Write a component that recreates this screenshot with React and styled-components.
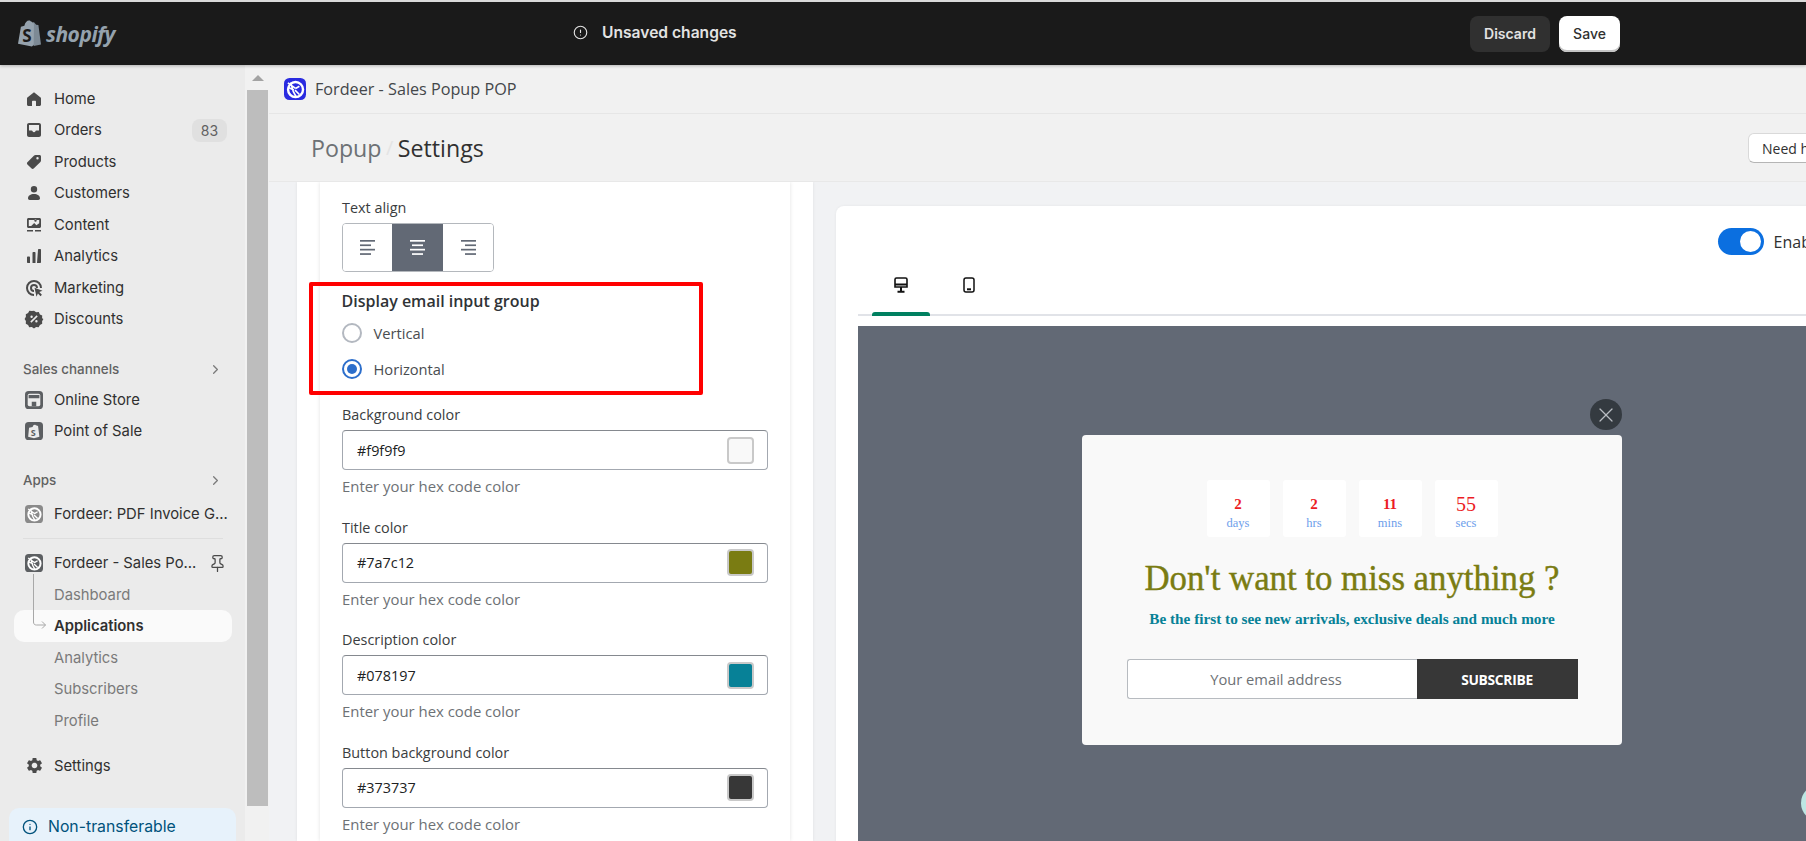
import React from "react"
import styled, { createGlobalStyle } from "styled-components"
import { AlertCircle, ChevronRight, Info, Pin, X } from "lucide-react"
import { MdSettings } from "react-icons/md"

const GlobalStyle = createGlobalStyle`
  html, body { margin: 0; padding: 0; overflow: hidden; background: #f1f1f1; }
  * { box-sizing: border-box; }
`

const Page = styled.div`
  width: 1806px;
  height: 841px;
  overflow: hidden;
  display: flex;
  flex-direction: column;
  border-top: 2px solid #d9d9d9;
  font-family: "Open Sans", "Liberation Sans", sans-serif;
`

const TopBar = styled.header`
  height: 63px;
  flex: none;
  display: flex;
  align-items: center;
  background: #1a1a1a;
  position: relative;
  z-index: 2;
  box-shadow: 0 1px 3px rgba(0, 0, 0, 0.25);
`

const Brand = styled.div`
  width: 573px;
  padding-left: 18px;
  display: flex;
  align-items: center;
  gap: 5px;
`

const BrandName = styled.span`
  font-family: "Open Sans", sans-serif;
  font-weight: 700;
  font-style: italic;
  font-size: 21px;
  letter-spacing: -0.5px;
  color: #95a2ad;
`

const Unsaved = styled.div`
  flex: 1;
  display: flex;
  align-items: center;
  gap: 14px;
  color: #e3e3e3;
  font-family: Inter, sans-serif;
  font-weight: 600;
  font-size: 15.6px;
  margin-top: -2px;
`

const BarActions = styled.div`
  display: flex;
  gap: 9px;
  padding-right: 186px;
`

const BarButton = styled.button`
  height: 36px;
  width: ${(p) => (p.$primary ? "61px" : "80px")};
  border: 0;
  border-radius: 8px;
  font-family: Inter, sans-serif;
  font-size: 14px;
  font-weight: ${(p) => (p.$primary ? 500 : 600)};
  background: ${(p) => (p.$primary ? "#fff" : "#303030")};
  color: ${(p) => (p.$primary ? "#303030" : "#e3e3e3")};
  box-shadow: ${(p) => (p.$primary ? "inset 0 -2px 0 #c4c4c4" : "none")};
`

const Body = styled.div`
  flex: 1;
  min-height: 0;
  display: flex;
`

const Sidebar = styled.nav`
  width: 245px;
  flex: none;
  background: #ebebeb;
  padding-top: 18px;
  overflow: hidden;
  font-family: Inter, sans-serif;
`

const NavRow = styled.div`
  position: relative;
  height: 31.5px;
  margin: 0 13px 0 14px;
  padding-right: 5px;
  display: flex;
  align-items: center;
  border-radius: 10px;
  white-space: nowrap;
  font-size: 14.8px;
  color: ${(p) => (p.$sub ? "#7a7a7a" : "#303030")};
  font-weight: ${(p) => (p.$active ? 600 : 400)};
  background: ${(p) => (p.$active ? "#fafafa" : "transparent")};
`

const NavIcon = styled.span`
  width: 40px;
  flex: none;
  display: flex;
  justify-content: center;
  color: #4a4a4a;
`

const Badge = styled.span`
  margin-left: auto;
  width: 35px;
  height: 23px;
  border-radius: 8px;
  background: #e0e0e0;
  color: #616161;
  font-size: 14px;
  display: flex;
  align-items: center;
  justify-content: center;
`

const PinSlot = styled.span`
  margin-left: auto;
  display: flex;
  color: #4a4a4a;
`

const SectionHead = styled.div`
  height: 27px;
  margin: ${(p) => p.$before || "20.5px"} 22px ${(p) => p.$after || "1.7px"} 23px;
  display: flex;
  align-items: center;
  justify-content: space-between;
  font-size: 13.4px;
  font-weight: 550;
  color: #616161;
`

const Divider = styled.hr`
  margin: 9px 22px 8px 23px;
  border: 0;
  border-top: 1px solid #dedede;
`

const Tree = styled.svg`
  position: absolute;
  left: 18px;
  top: -36px;
`

const SettingsRow = styled.div`
  margin-top: 13.5px;
`

const Notice = styled.div`
  margin: 27px 9px 0;
  height: 60px;
  border-radius: 10px 10px 0 0;
  background: #e7f2fb;
  color: #00527c;
  padding: 8px 0 0 13px;
  display: flex;
  gap: 10px;
  font-size: 15.8px;
  font-weight: 400;
  align-items: flex-start;
  line-height: 22px;
  svg { margin-top: 3px; }
`

const ScrollTrack = styled.div`
  width: 24px;
  flex: none;
  background: #f1f1f1;
  padding-left: 2px;
`

const ScrollArrow = styled.div`
  width: 0;
  margin: 10px auto 9px 5px;
  border-left: 6px solid transparent;
  border-right: 6px solid transparent;
  border-bottom: 6px solid #a3a3a3;
`

const ScrollThumb = styled.div`
  width: 21px;
  height: 716px;
  background: #bdbdbd;
`

const Main = styled.main`
  flex: 1;
  min-width: 0;
  display: flex;
  flex-direction: column;
`

const AppHeader = styled.div`
  height: 49px;
  flex: none;
  display: flex;
  align-items: center;
  gap: 9px;
  padding-left: 15px;
  border-bottom: 1px solid #e6e6e6;
  background: #f1f1f1;
  font-size: 16.2px;
  color: #44474a;
`

const TitleRow = styled.div`
  height: 68px;
  flex: none;
  display: flex;
  align-items: center;
  padding-left: 42px;
  border-bottom: 1px solid #e8e8e8;
  background: #f1f1f1;
  font-size: 23.2px;
  position: relative;
`

const Crumb = styled.span`
  color: ${(p) => (p.$current ? "#303030" : "#6d7175")};
`

const CrumbSlash = styled.span`
  color: #e4e4e4;
  margin: 0 4.5px;
  font-size: 20px;
`

const HelpButton = styled.button`
  position: absolute;
  left: 1479px;
  top: 19px;
  width: 90px;
  height: 30px;
  padding: 0 0 0 13px;
  text-align: left;
  border: 1px solid #d9d9d9;
  border-bottom-color: #b5b5b5;
  border-radius: 6px;
  background: #fff;
  font-family: "Open Sans", sans-serif;
  font-size: 14px;
  color: #303030;
`

const Content = styled.div`
  flex: 1;
  min-height: 0;
  display: flex;
  padding-left: 28px;
  background: #f1f2f4;
`

const FormPanel = styled.div`
  width: 516px;
  flex: none;
  padding: 0 23px;
  background: #fff;
  box-shadow: 0 0 3px rgba(0, 0, 0, 0.08);
  overflow: hidden;
`

const FormCard = styled.div`
  height: 100%;
  padding: 16px 22px 0;
  background: #fff;
  box-shadow: 0 0 4px rgba(0, 0, 0, 0.12);
`

const FieldLabel = styled.div`
  height: 20px;
  line-height: 20px;
  margin-bottom: 5px;
  font-size: 14.4px;
  color: #3a3d40;
`

const Segments = styled.div`
  width: 152px;
  height: 49px;
  display: grid;
  grid-template-columns: 49px 51px 50px;
  border: 1px solid #b4b8bd;
  border-radius: 4px;
  overflow: hidden;
`

const Segment = styled.div`
  display: flex;
  align-items: center;
  justify-content: center;
  background: ${(p) => (p.$on ? "#626975" : "#fff")};
  color: ${(p) => (p.$on ? "#fff" : "#626975")};
`

const Highlight = styled.fieldset`
  width: 394px;
  height: 113px;
  margin: 10px 0 0 -33px;
  padding: 4.5px 0 0 28.5px;
  border: 4.5px solid #ff0000;
  border-radius: 2px;
`

const GroupTitle = styled.div`
  height: 20px;
  line-height: 20px;
  margin-bottom: 4px;
  font-size: 16px;
  font-weight: 600;
  color: #303336;
`

const RadioRow = styled.label`
  height: 36px;
  padding-top: 1px;
  display: flex;
  align-items: center;
  gap: 12px;
  font-size: 14.7px;
  color: #4a4d50;
`

const RadioDot = styled.span`
  width: 20px;
  height: 20px;
  border-radius: 50%;
  flex: none;
  border: 2px solid ${(p) => (p.$on ? "#2c6ecb" : "#b3b8c0")};
  display: flex;
  align-items: center;
  justify-content: center;
  &::after {
    content: "";
    width: 10px;
    height: 10px;
    border-radius: 50%;
    background: ${(p) => (p.$on ? "#2c6ecb" : "transparent")};
  }
`

const ColorField = styled.div`
  width: 426px;
  margin-top: ${(p) => (p.$first ? "10px" : "21.5px")};
`

const ColorBox = styled.div`
  height: 40px;
  display: flex;
  align-items: center;
  padding: 0 13px 0 14px;
  border: 1px solid #a3a8b0;
  border-top-color: #85898f;
  border-radius: 4px;
`

const HexInput = styled.input`
  flex: 1;
  min-width: 0;
  border: 0;
  outline: 0;
  padding: 0;
  font-family: "Open Sans", sans-serif;
  font-size: 14.4px;
  color: #202223;
  background: transparent;
`

const Swatch = styled.span`
  width: 27px;
  height: 27px;
  border: 2px solid #c9c9c9;
  border-radius: 4px;
  background: ${(p) => p.$color};
`

const Helper = styled.div`
  margin-top: 6px;
  height: 20px;
  line-height: 20px;
  font-size: 14.9px;
  color: #6d7175;
`

const RightPane = styled.div`
  padding: 24px 0 0 23px;
`

const PreviewCard = styled.section`
  width: 1032px;
  height: 700px;
  padding: 22px 22px 0;
  background: #fff;
  border-radius: 8px;
  box-shadow: 0 0 3px rgba(0, 0, 0, 0.06);
`

const EnableRow = styled.div`
  height: 27px;
  display: flex;
  justify-content: flex-end;
  align-items: center;
  gap: 10px;
  padding-right: 22px;
  font-size: 16px;
  color: #303030;
`

const Toggle = styled.span`
  width: 46px;
  height: 27px;
  border-radius: 14px;
  background: #0b6fe0;
  display: flex;
  justify-content: flex-end;
  align-items: center;
  padding-right: 3px;
  &::after {
    content: "";
    width: 21px;
    height: 21px;
    border-radius: 50%;
    background: #fff;
  }
`

const TabList = styled.div`
  height: 47px;
  margin: 14px 0 10px;
  padding-left: 14px;
  display: flex;
  gap: 10px;
  border-bottom: 2px solid #e1e3e8;
`

const Tab = styled.div`
  width: 58px;
  height: 47px;
  padding-top: 8px;
  display: flex;
  flex-direction: column;
  align-items: center;
  justify-content: space-between;
  color: #111;
  &::after {
    content: "";
    width: 100%;
    height: 4px;
    border-radius: 3px 3px 0 0;
    background: ${(p) => (p.$on ? "#008060" : "transparent")};
  }
`

const Preview = styled.div`
  position: relative;
  width: 988px;
  height: 600px;
  padding-top: 109px;
  display: flex;
  justify-content: center;
  align-items: flex-start;
  background: #626975;
`

const Popup = styled.div`
  position: relative;
  width: 540px;
  height: 310px;
  padding-top: 45px;
  display: flex;
  flex-direction: column;
  align-items: center;
  border-radius: 4px;
  background: #f9f9f9;
  font-family: "Liberation Serif", serif;
`

const CloseButton = styled.span`
  position: absolute;
  top: -36px;
  right: 0;
  width: 32px;
  height: 31px;
  border-radius: 50%;
  background: #343a40;
  color: #b9bdc2;
  display: flex;
  align-items: center;
  justify-content: center;
`

const Countdown = styled.div`
  display: flex;
  gap: 13px;
`

const TimeBox = styled.div`
  width: 63px;
  height: 57px;
  padding-top: 14px;
  border-radius: 3px;
  background: #fff;
  display: flex;
  flex-direction: column;
  align-items: center;
`

const TimeValue = styled.span`
  font-size: ${(p) => (p.$big ? "20px" : "15px")};
  line-height: 21px;
  font-weight: ${(p) => (p.$big ? 400 : 700)};
  color: #ec1c24;
`

const TimeUnit = styled.span`
  font-size: 12.5px;
  line-height: 16px;
  color: #6d9eeb;
`

const PopupTitle = styled.h2`
  margin: 21.5px 0 0;
  font-size: 34.8px;
  line-height: 40px;
  font-weight: 400;
  -webkit-text-stroke: 0.4px #7a7c12;
  color: #7a7c12;
`

const PopupText = styled.p`
  margin: 10.5px 0 0;
  font-size: 15.25px;
  line-height: 20px;
  font-weight: 700;
  color: #078197;
`

const SubscribeForm = styled.div`
  width: 451px;
  height: 40px;
  margin-top: 30px;
  display: flex;
`

const EmailInput = styled.input`
  width: 290px;
  height: 40px;
  padding: 0 0 0 8px;
  border: 1px solid #b7bbc0;
  border-right: 0;
  border-radius: 3px 0 0 3px;
  outline: 0;
  background: #fff;
  text-align: center;
  font-family: "Open Sans", sans-serif;
  font-size: 14.7px;
  &::placeholder { color: #6d7175; opacity: 1; }
`

const SubscribeButton = styled.button`
  flex: 1;
  border: 0;
  background: #373737;
  color: #fff;
  font-family: "Open Sans", sans-serif;
  font-size: 13.8px;
  font-weight: 700;
  letter-spacing: -0.3px;
`

const ChatBubble = styled.span`
  position: absolute;
  left: 943px;
  top: 459px;
  width: 36px;
  height: 36px;
  border-radius: 50%;
  background: #bde6e3;
`

// hand drawn icons, all on a 20 box
const Icon = ({ children, size = 20 }) => (
  <svg width={size} height={size} viewBox="0 0 20 20" fill="currentColor">{children}</svg>
)

const icons = {
  home: <path d="M10 3.2 3.4 8.6c-.3.2-.4.5-.4.8V15.500c0 .8.7 1.500 1.500 1.500H8v-4.200c0-.6.500-1 1-1h2c.6 0 1 .4 1 1V17h3.500c.8 0 1.500-.7 1.500-1.500V9.400c0-.3-.1-.6-.4-.8z" />,
  orders: <path fillRule="evenodd" d="M5 3h10c1.100 0 2 .9 2 2v10c0 1.100-.9 2-2 2H5c-1.100 0-2-.9-2-2V5c0-1.100.9-2 2-2zm0 2v5.500h2.500c.6 0 1 .3 1.200.9.200.5.700.8 1.300.8s1.100-.3 1.300-.8c.2-.6.600-.9 1.200-.9H15V5z" />,
  products: <path fillRule="evenodd" d="M11.500 3H15.500c.8 0 1.500.7 1.500 1.500v4c0 .5-.2 1-.6 1.400l-6.700 6.700c-.6.6-1.500.6-2.100 0l-4.200-4.200c-.6-.6-.6-1.500 0-2.100l6.700-6.700c.4-.4.9-.6 1.400-.6zm2 4.500a1.200 1.200 0 1 0 0-2.400 1.200 1.200 0 0 0 0 2.400z" />,
  customers: <path d="M10 3a3.200 3.200 0 1 1 0 6.400A3.200 3.200 0 0 1 10 3zM4 15.300C4 12.800 6.500 11 10 11s6 1.800 6 4.300c0 1-.7 1.700-1.700 1.700H5.700C4.700 17 4 16.300 4 15.300z" />,
  content: <path fillRule="evenodd" d="M4.500 3h11C16.300 3 17 3.700 17 4.500v7c0 .8-.7 1.500-1.500 1.500h-11C3.700 13 3 12.300 3 11.500v-7C3 3.700 3.700 3 4.500 3zm.300 8h2.400l3-3 2.200 2.200 2.800-2V5H4.800zM11.500 6.800a1.200 1.200 0 1 0 0-2.400 1.200 1.200 0 0 0 0 2.400zM3 15h6v1.500H3zm8 0h6v1.500h-6z" />,
  analytics: <path d="M3 11.500c0-.6.400-1 1-1h1c.6 0 1 .4 1 1V17H4c-.6 0-1-.4-1-1zM8.500 7c0-.6.400-1 1-1h1c.6 0 1 .4 1 1v10h-3zM14 4c0-.6.400-1 1-1h1c.6 0 1 .4 1 1v12c0 .6-.4 1-1 1h-3z" />,
  marketing: <path fillRule="evenodd" d="M10 2a8 8 0 0 1 8 8h-2a6 6 0 1 0-6 6v2a8 8 0 0 1 0-16zm0 4a4 4 0 0 1 4 4h-2a2 2 0 1 0-2 2v2a4 4 0 0 1 0-8zm.500 3.800 8 3-3.200 1.300 2.600 2.700-1.300 1.400-2.700-2.700-1.400 3.200z" />,
  discounts: <path fillRule="evenodd" d="M10 1.800l2.200 1.400 2.600-.1 1.100 2.300 2.300 1.200-.1 2.600L19.400 10l-1.300 2.200.1 2.600-2.300 1.100-1.200 2.300-2.600-.1L10 19.400l-2.200-1.300-2.600.1-1.100-2.300-2.300-1.200.1-2.600L.6 10l1.300-2.200-.1-2.600 2.300-1.100 1.200-2.300 2.600.1zM7.600 8.900a1.200 1.200 0 1 0 0-2.400 1.200 1.200 0 0 0 0 2.400zm4.800 4.600a1.200 1.200 0 1 0 0-2.400 1.200 1.200 0 0 0 0 2.400zM12.600 6.300 6.300 12.600l1.100 1.100 6.300-6.300z" />,
}

const ShopifyBag = () => (
  <svg width="23" height="27" viewBox="0 0 23 27">
    <path fill="#95a2ad" d="M0 23.800 2.900 6.800 6.400 5.700C7.100 2.400 8.900.4 11 .4c1 0 1.600.5 2 1.100.6 0 1.100.4 1.500 1.100l1.400-.4 1 21.800-3 2.600z" />
    <path fill="#7d8a95" d="M16 2.300 18.200 4.700 20.400 5 23 24.400 15.700 26z" />
    <text x="4.200" y="21.500" fontFamily="Open Sans" fontWeight="700" fontSize="17" fill="#1a1a1a">S</text>
  </svg>
)

const AppLogo = ({ bg, size = 18, radius = 4 }) => (
  <svg width={size} height={size} viewBox="0 0 20 20">
    <rect width="20" height="20" rx={radius} fill={bg} />
    <circle cx="10.500" cy="10.500" r="6.800" fill="none" stroke="#fff" strokeWidth="2.200" />
    <path d="M3.500 4.500 10.500 9.500M3.500 8.500 9 11M6 4 8.500 12.500 11 17M10.500 9.500 14 7.500M10 11 14 15" fill="none" stroke="#fff" strokeWidth="1.500" />
  </svg>
)

const StoreTile = () => (
  <svg width="18" height="18" viewBox="0 0 20 20">
    <rect width="20" height="20" rx="4" fill="#5c5f62" />
    <rect x="3" y="3" width="14" height="14" rx="2" fill="#ebebeb" />
    <path d="M4 4.500h12v3.500H4zM7.500 17v-5h5v5z" fill="#5c5f62" />
  </svg>
)

const PosTile = () => (
  <svg width="18" height="18" viewBox="0 0 20 20">
    <rect width="20" height="20" rx="4" fill="#5c5f62" />
    <path d="M4.500 6.500l4-1C9 3.500 10.500 2.500 12 3.500l2.500 1 1.500 12-6 1.500-6.500-1.500z" fill="#ebebeb" />
    <text x="6.300" y="15" fontFamily="Open Sans" fontWeight="700" fontSize="10" fill="#5c5f62">S</text>
  </svg>
)

const AlignIcon = ({ side }) => {
  const bars = side === "left"
    ? [[0, 15], [0, 11], [0, 15], [0, 11]]
    : side === "center"
      ? [[0, 15], [2, 11], [0, 15], [2, 11]]
      : [[0, 15], [4, 11], [0, 15], [4, 11]]
  return (
    <svg width="15" height="15" viewBox="0 0 15 15" fill="currentColor">
      {bars.map(([x, w], i) => <rect key={i} x={x} y={i * 4.400} width={w} height="1.700" />)}
    </svg>
  )
}

const DesktopIcon = () => (
  <svg width="14" height="16" viewBox="0 0 14 16" fill="none" stroke="currentColor" strokeWidth="1.600">
    <path d="M2.500 1h9c.8 0 1.500.7 1.500 1.500V10H1V2.500C1 1.700 1.700 1 2.500 1z" />
    <path d="M1 7.500h12M7 10v4M3.500 14.800h7" strokeWidth="2" />
  </svg>
)

const MobileIcon = () => (
  <svg width="12" height="16" viewBox="0 0 12 16" fill="none" stroke="currentColor" strokeWidth="1.500">
    <rect x="1" y="1" width="10" height="14" rx="2" />
    <path d="M4 12.300h4" strokeWidth="2" />
  </svg>
)

const mainNav = [
  ["home", "Home"],
  ["orders", "Orders", "83"],
  ["products", "Products"],
  ["customers", "Customers"],
  ["content", "Content"],
  ["analytics", "Analytics"],
  ["marketing", "Marketing"],
  ["discounts", "Discounts"],
]

const colorFields = [
  ["Background color", "#f9f9f9"],
  ["Title color", "#7a7c12"],
  ["Description color", "#078197"],
  ["Button background color", "#373737"],
]

const countdown = [
  ["2", "days"],
  ["2", "hrs"],
  ["11", "mins"],
  ["55", "secs", true],
]

export default function App() {
  return (
    <Page>
      <GlobalStyle />
      <TopBar>
        <Brand>
          <ShopifyBag />
          <BrandName>shopify</BrandName>
        </Brand>
        <Unsaved>
          <AlertCircle size={15} strokeWidth={1.8} />
          Unsaved changes
        </Unsaved>
        <BarActions>
          <BarButton>Discard</BarButton>
          <BarButton $primary>Save</BarButton>
        </BarActions>
      </TopBar>

      <Body>
        <Sidebar>
          {mainNav.map(([key, label, count]) => (
            <NavRow key={key}>
              <NavIcon><Icon>{icons[key]}</Icon></NavIcon>
              {label}
              {count && <Badge>{count}</Badge>}
            </NavRow>
          ))}

          <SectionHead>Sales channels <ChevronRight size={15} color="#7a7a7a" /></SectionHead>
          <NavRow><NavIcon><StoreTile /></NavIcon>Online Store</NavRow>
          <NavRow><NavIcon><PosTile /></NavIcon>Point of Sale</NavRow>

          <SectionHead $before="19.8px" $after="4px">Apps <ChevronRight size={15} color="#7a7a7a" /></SectionHead>
          <NavRow><NavIcon><AppLogo bg="#8a8a8a" /></NavIcon>Fordeer: PDF Invoice G...</NavRow>
          <Divider />
          <NavRow>
            <NavIcon><AppLogo bg="#5c5f62" /></NavIcon>
            Fordeer - Sales Po...
            <PinSlot><Pin size={19} strokeWidth={1.6} /></PinSlot>
          </NavRow>
          <NavRow $sub>
            <NavIcon />Dashboard
          </NavRow>
          <NavRow $active>
            <Tree width="20" height="60" viewBox="0 0 20 60" fill="none" stroke="#a8a8a8" strokeWidth="1">
              <path d="M1.500 0v48c0 2 1 3 3 3h9M10 47.500l3.500 3.500-3.500 3.500" />
            </Tree>
            <NavIcon />Applications
          </NavRow>
          <NavRow $sub><NavIcon />Analytics</NavRow>
          <NavRow $sub><NavIcon />Subscribers</NavRow>
          <NavRow $sub><NavIcon />Profile</NavRow>

          <SettingsRow>
            <NavRow>
              <NavIcon><MdSettings size={19} /></NavIcon>Settings
            </NavRow>
          </SettingsRow>

          <Notice><Info size={16} strokeWidth={2} />Non-transferable</Notice>
        </Sidebar>

        <ScrollTrack>
          <ScrollArrow />
          <ScrollThumb />
        </ScrollTrack>

        <Main>
          <AppHeader>
            <AppLogo bg="#2a2be0" size={22} radius={5} />
            Fordeer - Sales Popup POP
          </AppHeader>
          <TitleRow>
            <Crumb>Popup</Crumb>
            <CrumbSlash>/</CrumbSlash>
            <Crumb $current>Settings</Crumb>
            <HelpButton>Need help?</HelpButton>
          </TitleRow>

          <Content>
            <FormPanel>
              <FormCard>
                <FieldLabel>Text align</FieldLabel>
                <Segments>
                  <Segment><AlignIcon side="left" /></Segment>
                  <Segment $on><AlignIcon side="center" /></Segment>
                  <Segment><AlignIcon side="right" /></Segment>
                </Segments>

                <Highlight>
                  <GroupTitle>Display email input group</GroupTitle>
                  <RadioRow><RadioDot />Vertical</RadioRow>
                  <RadioRow><RadioDot $on />Horizontal</RadioRow>
                </Highlight>

                {colorFields.map(([label, hex], i) => (
                  <ColorField key={label} $first={i === 0}>
                    <FieldLabel>{label}</FieldLabel>
                    <ColorBox>
                      <HexInput readOnly value={hex} />
                      <Swatch $color={hex} />
                    </ColorBox>
                    <Helper>Enter your hex code color</Helper>
                  </ColorField>
                ))}
              </FormCard>
            </FormPanel>

            <RightPane>
              <PreviewCard>
                <EnableRow><Toggle />Enable</EnableRow>
                <TabList>
                  <Tab $on><DesktopIcon /></Tab>
                  <Tab><MobileIcon /></Tab>
                </TabList>
                <Preview>
                  <Popup>
                    <CloseButton><X size={24} strokeWidth={1.2} /></CloseButton>
                    <Countdown>
                      {countdown.map(([value, unit, big]) => (
                        <TimeBox key={unit}>
                          <TimeValue $big={big}>{value}</TimeValue>
                          <TimeUnit>{unit}</TimeUnit>
                        </TimeBox>
                      ))}
                    </Countdown>
                    <PopupTitle>Don't want to miss anything ?</PopupTitle>
                    <PopupText>Be the first to see new arrivals, exclusive deals and much more</PopupText>
                    <SubscribeForm>
                      <EmailInput placeholder="Your email address" />
                      <SubscribeButton>SUBSCRIBE</SubscribeButton>
                    </SubscribeForm>
                  </Popup>
                  <ChatBubble />
                </Preview>
              </PreviewCard>
            </RightPane>
          </Content>
        </Main>
      </Body>
    </Page>
  )
}
